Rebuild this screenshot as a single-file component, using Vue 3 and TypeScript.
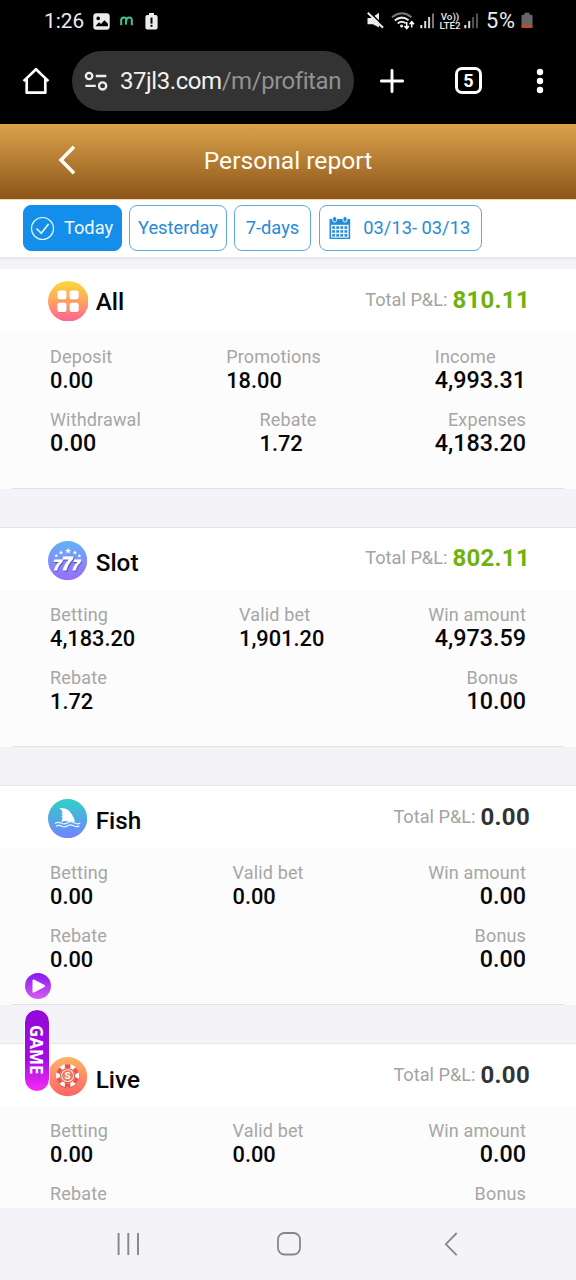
<script setup lang="ts">
type Metric = { label: string; value?: string; large?: boolean; side?: 'start' | 'end' }
type Section = {
  key: 'all' | 'slot' | 'fish' | 'live'
  name: string
  total: string
  rows: Metric[][]
}

const sections: Section[] = [
  {
    key: 'all',
    name: 'All',
    total: '810.11',
    rows: [
      [
        { label: 'Deposit', value: '0.00' },
        { label: 'Promotions', value: '18.00' },
        { label: 'Income', value: '4,993.31', large: true },
      ],
      [
        { label: 'Withdrawal', value: '0.00', large: true },
        { label: 'Rebate', value: '1.72' },
        { label: 'Expenses', value: '4,183.20', large: true, side: 'end' },
      ],
    ],
  },
  {
    key: 'slot',
    name: 'Slot',
    total: '802.11',
    rows: [
      [
        { label: 'Betting', value: '4,183.20' },
        { label: 'Valid bet', value: '1,901.20' },
        { label: 'Win amount', value: '4,973.59', large: true, side: 'end' },
      ],
      [
        { label: 'Rebate', value: '1.72' },
        { label: 'Bonus', value: '10.00', large: true },
      ],
    ],
  },
  {
    key: 'fish',
    name: 'Fish',
    total: '0.00',
    rows: [
      [
        { label: 'Betting', value: '0.00' },
        { label: 'Valid bet', value: '0.00' },
        { label: 'Win amount', value: '0.00', large: true, side: 'end' },
      ],
      [
        { label: 'Rebate', value: '0.00' },
        { label: 'Bonus', value: '0.00', large: true, side: 'end' },
      ],
    ],
  },
  {
    key: 'live',
    name: 'Live',
    total: '0.00',
    rows: [
      [
        { label: 'Betting', value: '0.00' },
        { label: 'Valid bet', value: '0.00' },
        { label: 'Win amount', value: '0.00', large: true, side: 'end' },
      ],
      [{ label: 'Rebate' }, { label: 'Bonus', side: 'end' }],
    ],
  },
]

const chipAngles = [0, 60, 120, 180, 240, 300]
const calendarRows = [11.5, 15.4, 19.3]
const calendarCols = [3.2, 7.3, 11.4, 15.5]
</script>

<template>
  <div class="screen">
    <div class="status">
      <span class="clock">1:26</span>
      <svg class="st-photo" width="17" height="17" viewBox="0 0 17 17">
        <rect x="0.3" y="0.3" width="16.4" height="16.4" rx="3" fill="#ececec" />
        <circle cx="5.2" cy="5.4" r="1.8" fill="#000" />
        <path d="M2.4 13.2 6 9.2l2 1.8 3.4-3.7 3.5 3.4v2.5z" fill="#000" />
      </svg>
      <svg class="st-m" width="13" height="10" viewBox="0 0 13 10">
        <path d="M1.2 9.2V4.2Q1.2 1.4 3.8 1.4 6.4 1.4 6.2 4.2L5.8 8.6M6.3 4.2Q6.8 1.4 9.2 1.4 11.9 1.4 11.8 4.2V9.2" fill="none" stroke="#3fc98f" stroke-width="2" />
      </svg>
      <svg class="st-alert" width="13" height="17" viewBox="0 0 13 17">
        <path d="M4 0h5v2h1.8Q12.6 2 12.6 4v10.6q0 2-1.8 2H2.2q-1.8 0-1.8-2V4q0-2 1.8-2H4z" fill="#ececec" />
        <rect x="5.5" y="4.6" width="2" height="6" fill="#000" />
        <rect x="5.5" y="11.8" width="2" height="2" fill="#000" />
      </svg>
      <span class="grow"></span>
      <svg class="st-mute" width="17" height="17" viewBox="0 0 17 17">
        <path d="M.5 6h3.800L12 .8v14.800L6 12.200H.5z" fill="#ececec" />
        <path d="M2.300-.2 17.300 14.600" stroke="#000" stroke-width="1.600" />
        <path d="M.8.8 16 15.8" stroke="#ececec" stroke-width="2" />
      </svg>
      <svg class="st-wifi" width="24" height="18" viewBox="0 0 24 18">
        <g fill="none" stroke-width="2">
          <path d="M1 5.2Q11 -2.6 20.5 5.2" stroke="#777" />
          <path d="M3.8 8.4Q10.7 3 17.6 8.2" stroke="#e6e6e6" />
          <path d="M6.7 11.4q4-3.3 8-.2" stroke="#e6e6e6" />
        </g>
        <circle cx="10.600" cy="14" r="1.600" fill="#e6e6e6" />
        <path d="M15.700 10v6M13.500 14l2.200 2.500 2.200-2.500M20.800 15.500V10M18.600 12.200l2.200-2.500 2.200 2.500" fill="none" stroke="#fff" stroke-width="1.500" />
      </svg>
      <svg class="st-bars" width="15" height="16" viewBox="0 0 15 16">
        <rect x="0.3" y="12" width="2" height="3.2" fill="#e8e8e8" />
        <rect x="4.2" y="8" width="2" height="7.2" fill="#d8d8d8" />
        <rect x="8.1" y="4" width="2" height="11.2" fill="#d0d0d0" />
        <rect x="12" y="0.5" width="2" height="14.7" fill="#777" />
      </svg>
      <span class="lte"><b>Vo))</b><b>LTE2</b></span>
      <svg class="st-bars second" width="15" height="16" viewBox="0 0 15 16">
        <rect x="0.3" y="12" width="2" height="3.2" fill="#e8e8e8" />
        <rect x="4.2" y="8" width="2" height="7.2" fill="#d8d8d8" />
        <rect x="8.1" y="4" width="2" height="11.2" fill="#555" />
        <rect x="12" y="0.5" width="2" height="14.7" fill="#555" />
      </svg>
      <span class="percent">5%</span>
      <svg class="st-batt" width="12" height="17" viewBox="0 0 12 17">
        <path d="M3.5.8h5v2h1.8q1.2 0 1.2 1.2v10.4q0 1.6-1.6 1.6H2.1Q.5 16 .5 14.4V4Q.5 2.800 1.7 2.8h1.800z" fill="#666" />
        <path d="M.5 13.300h11v1.100q0 1.600-1.600 1.600H2.100Q.5 16 .5 14.400z" fill="#c8472f" />
      </svg>
    </div>

    <div class="browser">
      <svg class="br-home" width="28" height="28" viewBox="0 0 28 28">
        <path d="M1.600 14.100 14 2.200 26.400 14.100M4.700 12v13.700h18.600V12" fill="none" stroke="#fff" stroke-width="2.700" stroke-linejoin="round" />
      </svg>
      <div class="omnibox">
        <svg width="24" height="20" viewBox="0 0 24 20">
          <g fill="none" stroke="#efefef" stroke-width="2.300">
            <circle cx="5.100" cy="5" r="3.200" />
            <path d="M11.800 5h10.500M1.400 14.800h10.400" />
            <circle cx="18.600" cy="14.900" r="3.600" />
          </g>
        </svg>
        <span class="url">37jl3.com<i>/m/profitan</i></span>
      </div>
      <svg class="br-plus" width="24" height="24" viewBox="0 0 24 24">
        <path d="M12 1.400v21.200M1.400 12h21.200" stroke="#fff" stroke-width="2.900" stroke-linecap="round" />
      </svg>
      <span class="tabs">5</span>
      <svg class="br-more" width="8" height="26" viewBox="0 0 8 26">
        <g fill="#fff"><circle cx="4" cy="4" r="3.200" /><circle cx="4" cy="13" r="3.200" /><circle cx="4" cy="22" r="3.200" /></g>
      </svg>
    </div>

    <header class="title-bar">
      <svg width="20" height="32" viewBox="0 0 20 32">
        <path d="M17 2.800 4 16l13 13.200" fill="none" stroke="#fffdf5" stroke-width="3.600" />
      </svg>
      <h1>Personal report</h1>
    </header>

    <nav class="filters">
      <button class="chip active">
        <svg width="25" height="25" viewBox="0 0 25 25" fill="none" stroke="#e5f4ff">
          <circle cx="12.500" cy="12.500" r="11" stroke-width="1.200" />
          <path d="m6.500 12.500 4.700 4.800 7.400-9.300" stroke-width="1.700" />
        </svg>
        <span>Today</span>
      </button>
      <button class="chip yesterday"><span>Yesterday</span></button>
      <button class="chip week"><span>7-days</span></button>
      <button class="chip range">
        <svg width="22" height="24" viewBox="0 0 22 24">
          <path d="M0.500 3h20.700v20H.5z" fill="#258bd8" />
          <path d="M2 8.800h17.700v12.900H2z" fill="#e9f5ff" />
          <g v-for="y in calendarRows" :key="y" fill="#258bd8">
            <rect v-for="x in calendarCols" :key="x" :x="x" :y="y - 1.2" width="2.700" height="2.500" />
          </g>
          <rect x="3.600" y="0.500" width="4" height="5.500" rx="2" fill="#258bd8" stroke="#fff" stroke-width="0.900" />
          <rect x="14" y="0.500" width="4" height="5.500" rx="2" fill="#258bd8" stroke="#fff" stroke-width="0.900" />
        </svg>
        <span>03/13- 03/13</span>
      </button>
    </nav>

    <main class="list">
      <section v-for="s in sections" :key="s.key" class="card" :class="s.key">
        <div class="head">
          <svg v-if="s.key === 'all'" class="badge" viewBox="0 0 40 40">
            <defs>
              <linearGradient id="g-all" x2="0" y2="1"><stop stop-color="#fbd936" /><stop offset="0.500" stop-color="#ffa45f" /><stop offset="1" stop-color="#ff6097" /></linearGradient>
            </defs>
            <circle cx="20" cy="20" r="20" fill="url(#g-all)" />
            <g fill="#e86a4c" opacity="0.600">
              <rect x="9.500" y="10.300" width="9" height="9" rx="2.500" /><rect x="21.500" y="10.300" width="9" height="9" rx="2.500" />
              <rect x="9.500" y="22.300" width="9" height="9" rx="2.500" /><rect x="21.500" y="22.300" width="9" height="9" rx="2.500" />
            </g>
            <g fill="#fff">
              <rect x="9.300" y="9.300" width="9" height="9" rx="2.500" /><rect x="21.300" y="9.300" width="9" height="9" rx="2.500" />
              <rect x="9.300" y="21.500" width="9" height="9" rx="2.500" /><rect x="21.300" y="21.500" width="9" height="9" rx="2.500" />
            </g>
          </svg>
          <svg v-else-if="s.key === 'slot'" class="badge" viewBox="0 0 40 40">
            <defs>
              <linearGradient id="g-slot" x2="0" y2="1"><stop stop-color="#61b4f6" /><stop offset="1" stop-color="#9b6cfa" /></linearGradient>
              <path id="star" d="M0-3 .9-1 3-.8 1.400.6 1.900 2.700 0 1.600-1.900 2.700-1.400.6-3-.8-.9-1z" />
            </defs>
            <circle cx="20" cy="20" r="20" fill="url(#g-slot)" />
            <g fill="#f2f6ff">
              <use href="#star" x="20.500" y="10" />
              <use href="#star" transform="translate(13.300 11.800) scale(.75)" /><use href="#star" transform="translate(27.500 11.800) scale(.75)" />
              <use href="#star" transform="translate(8.500 15) scale(.65)" /><use href="#star" transform="translate(32 15) scale(.65)" />
            </g>
            <g class="sevens" stroke-width="0.900">
              <g fill="#5748b8" stroke="#5748b8">
                <text x="6.200" y="30.300" font-size="15.500">7</text><text x="25" y="30.300" font-size="15.500">7</text>
              </g>
              <g fill="#fff" stroke="#fff">
                <text x="5.300" y="29.300" font-size="15.500">7</text><text x="24.300" y="29.300" font-size="15.500">7</text>
              </g>
              <text x="15" y="31" font-size="19" fill="#5748b8" stroke="#5748b8">7</text>
              <text x="14.100" y="30" font-size="19" fill="#fff" stroke="#fff">7</text>
            </g>
          </svg>
          <svg v-else-if="s.key === 'fish'" class="badge" viewBox="0 0 40 40">
            <defs>
              <linearGradient id="g-fish" x2="0" y2="1"><stop stop-color="#2fd0c7" /><stop offset="1" stop-color="#7482ff" /></linearGradient>
            </defs>
            <circle cx="20" cy="20" r="20" fill="url(#g-fish)" />
            <path d="M11.700 9.300Q23 8 27.500 22.700 24.300 24.300 20.500 23 17 21.800 13.500 23.800 15 20.300 14.800 18.500L13.500 17.500 15.200 16.500 13.800 15 15 13.800Q14 11.300 11.700 9.300z" fill="#fff" />
            <path d="M7 25q3.200-2.200 6.500-.3 3.200 1.700 6.500-.5 3.200-2.100 6.500 0 3.200 1.900 6.500.5M8 27.800q3-1.700 6 0 3 1.500 6-.5 3-1.800 6 0 3 1.500 6 .3" fill="none" stroke="#e2f7ff" stroke-width="1.300" />
          </svg>
          <svg v-else class="badge" viewBox="0 0 40 40">
            <defs>
              <linearGradient id="g-live" x2="0" y2="1"><stop stop-color="#ffb562" /><stop offset="1" stop-color="#ff6268" /></linearGradient>
            </defs>
            <circle cx="20" cy="20" r="20" fill="url(#g-live)" />
            <circle cx="20" cy="19.800" r="12" fill="#d34c42" opacity="0.600" />
            <circle cx="20" cy="19" r="11.800" fill="#fff" />
            <rect v-for="a in chipAngles" :key="a" x="17.200" y="7.400" width="5.600" height="3.900" fill="#e75449" :transform="`rotate(${a} 20 19)`" />
            <circle cx="20" cy="19" r="7.200" fill="#fff" stroke="#e75449" stroke-width="1.200" />
            <circle cx="20" cy="19" r="5.700" fill="#f07a55" />
            <text x="20" y="22.800" class="coin">S</text>
          </svg>
          <h2>{{ s.name }}</h2>
          <p class="total">
            <span>Total P&amp;L:</span>
            <strong :class="{ gain: s.total !== '0.00' }">{{ s.total }}</strong>
          </p>
        </div>
        <div class="body">
          <div v-for="(row, i) in s.rows" :key="i" class="row">
            <div v-for="m in row" :key="m.label" class="metric" :class="[m.side, { large: m.large }]">
              <span>{{ m.label }}</span>
              <strong v-if="m.value">{{ m.value }}</strong>
            </div>
          </div>
        </div>
      </section>
    </main>

    <svg class="float-play" width="28" height="28" viewBox="0 0 28 28">
      <defs>
        <linearGradient id="g-play" x2="0" y2="1"><stop stop-color="#8618ee" /><stop offset="1" stop-color="#d65cf2" /></linearGradient>
      </defs>
      <circle cx="14" cy="14" r="13.700" fill="#fff" />
      <circle cx="14" cy="14" r="13" fill="url(#g-play)" />
      <path d="M9.500 8.500v11.200L20 14z" fill="#fff" stroke="#fff" stroke-width="2" stroke-linejoin="round" />
    </svg>
    <div class="float-game"><span>GAME</span></div>

    <footer class="system-nav">
      <svg width="24" height="24" viewBox="0 0 24 24"><path d="M2.600 1v22M12.300 1v22M22 1v22" stroke="#87878b" stroke-width="1.900" /></svg>
      <svg class="nav-home" width="26" height="26" viewBox="0 0 26 26"><rect x="2" y="2" width="22" height="21.500" rx="6.500" fill="none" stroke="#87878b" stroke-width="1.800" /></svg>
      <svg width="14" height="24" viewBox="0 0 14 24"><path d="M12.700 1 1.800 12.200 12.700 23.200" fill="none" stroke="#87878b" stroke-width="1.800" /></svg>
    </footer>
  </div>
</template>

<style>
body {
  background: #f3f3f8;
}
</style>

<style scoped>
* {
  box-sizing: border-box;
}
.screen {
  position: relative;
  display: flex;
  flex-direction: column;
  width: 576px;
  height: 1280px;
  overflow: hidden;
  background: #f3f3f8;
  font-family: Roboto, "Liberation Sans", sans-serif;
}
svg {
  flex: none;
  display: block;
}
h1,
h2,
p {
  margin: 0;
}
.status {
  display: flex;
  align-items: flex-start;
  flex: none;
  height: 42px;
  padding: 0 43px 0 44px;
  background: #000;
  color: #ececec;
}
.clock,
.percent {
  font-size: 20.800px;
  line-height: 24px;
  margin-top: 8.500px;
}
.clock {
  width: 49px;
}
.st-photo {
  margin-top: 12.500px;
}
.st-m {
  margin: 15.500px 0 0 10px;
}
.st-alert {
  margin: 13px 0 0 12px;
}
.grow {
  flex: 1;
}
.st-mute {
  margin-top: 12px;
}
.st-wifi {
  margin: 12px 0 0 7px;
}
.st-bars {
  margin: 13px 0 0 5px;
}
.lte {
  display: flex;
  flex-direction: column;
  align-items: center;
  width: 22px;
  margin: 11.500px 0 0 4px;
  font-size: 9.800px;
  line-height: 9px;
}
.lte b {
  font-weight: 500;
}
.st-bars.second {
  margin-left: 3px;
}
.percent {
  width: 33px;
  margin-left: 7px;
  font-size: 21.800px;
  letter-spacing: 0.800px;
}
.st-batt {
  margin: 12px 0 0 2px;
}
.browser {
  display: flex;
  flex: none;
  align-items: center;
  height: 82px;
  padding: 0 32px 5px 22px;
  background: #000;
}
.omnibox {
  display: flex;
  align-items: center;
  width: 282px;
  height: 60px;
  margin-left: 22px;
  padding-left: 12px;
  border-radius: 30px;
  background: #333;
}
.url {
  margin-left: 12px;
  color: #f1f1f1;
  font-size: 24px;
  letter-spacing: -0.450px;
}
.url i {
  color: #929292;
  font-style: normal;
}
.br-plus {
  margin-left: 26px;
}
.tabs {
  width: 27px;
  height: 27px;
  margin-left: 51px;
  border: 3px solid #fff;
  border-radius: 7px;
  color: #fff;
  font-size: 18px;
  font-weight: 700;
  line-height: 22px;
  text-align: center;
}
.br-more {
  margin-left: auto;
}
.title-bar {
  position: relative;
  display: flex;
  flex: none;
  align-items: center;
  justify-content: center;
  height: 75px;
  padding-bottom: 2px;
  background: linear-gradient(#dba24b, #8c5519);
}
.title-bar svg {
  position: absolute;
  left: 56.500px;
  top: 20px;
}
.title-bar h1 {
  color: #fffdf5;
  font-size: 24.600px;
  font-weight: 400;
}
.filters {
  display: flex;
  flex: none;
  height: 58px;
  padding: 5px 0 0 23px;
  border-top: 1px solid #f7d8a8;
  background: #fff;
  box-shadow: 0 1px 3px #dedee3;
}
.chip {
  display: flex;
  align-items: center;
  justify-content: center;
  height: 46px;
  padding: 0;
  border: 1px solid #5fa9da;
  border-radius: 8px;
  background: #fff;
  color: #258bd8;
  font-family: inherit;
  font-size: 18.300px;
}
.chip span {
  padding-bottom: 2px;
}
.chip.active {
  gap: 8.500px;
  width: 98.500px;
  padding-right: 1px;
  border-color: #138eeb;
  background: #138eeb;
  color: #f1f9ff;
}
.yesterday {
  width: 98px;
  margin-left: 7.500px;
}
.week {
  width: 77px;
  margin-left: 7px;
}
.range {
  gap: 12px;
  width: 163.500px;
  margin-left: 7.500px;
  padding-right: 1px;
}
.list {
  flex: 1;
  min-height: 0;
  padding-top: 11.600px;
  overflow: hidden;
}
.card {
  height: 220px;
  margin-bottom: 38.250px;
  border-top: 1px solid #e6e6ea;
  background: #fff;
}
.card.all {
  border-top-color: #fff;
}
.card.live {
  height: auto;
}
.head {
  display: flex;
  align-items: flex-start;
  height: 62px;
  padding: 0 46px 0 48px;
}
.badge {
  width: 39.200px;
  height: 39.200px;
  margin-top: 13px;
}
.all .badge {
  width: 40.600px;
  height: 40.600px;
  margin: 11px -0.900px 0 -0.500px;
}
h2 {
  margin: 21.300px 0 0 8.500px;
  font-size: 24.300px;
  font-weight: 500;
  line-height: 28px;
  color: #060606;
}
.all h2 {
  margin-top: 18.800px;
}
.total {
  display: flex;
  align-items: flex-start;
  gap: 5px;
  margin: 16.500px 0 0 auto;
  line-height: 28px;
}
.total span {
  color: #a3a3a3;
  font-size: 18.200px;
  line-height: 28px;
}
.total strong {
  color: #333;
  font-size: 24px;
  font-weight: 700;
  letter-spacing: 0.300px;
}
.total .gain {
  color: #70b10c;
}
.body {
  position: relative;
  display: flex;
  flex-direction: column;
  gap: 16px;
  height: 157px;
  padding: 13px 50px 0;
  background: #fcfcfc;
}
.live .body {
  height: 103px;
}
.body::after {
  content: "";
  position: absolute;
  right: 12px;
  bottom: 0;
  left: 12px;
  height: 1px;
  background: #e2e2e6;
}
.live .body::after {
  display: none;
}
.row {
  display: flex;
  justify-content: space-between;
}
.metric {
  display: flex;
  flex-direction: column;
}
.metric.end {
  align-items: flex-end;
}
.metric span {
  color: #a6a6a6;
  font-size: 18px;
  line-height: 24px;
  letter-spacing: 0.150px;
}
.metric strong {
  color: #060606;
  font-size: 21.800px;
  font-weight: 500;
  line-height: 23px;
}
.metric.large strong {
  font-size: 23.300px;
}
.sevens {
  font-family: "Liberation Sans", sans-serif;
  font-style: italic;
  font-weight: 700;
}
.coin {
  fill: #fff;
  font-size: 10px;
  font-weight: 700;
  text-anchor: middle;
}
.float-play {
  position: absolute;
  left: 24.300px;
  top: 972.300px;
}
.float-game {
  position: absolute;
  left: 24px;
  top: 1009px;
  display: flex;
  align-items: center;
  justify-content: center;
  width: 25.500px;
  height: 82.500px;
  border: 1px solid #fff;
  border-radius: 13px;
  background: linear-gradient(#9208d8, #a40be2 60%, #f52bf5);
}
.float-game span {
  padding-right: 1px;
  color: #fff;
  font-family: "Noto Sans", sans-serif;
  font-size: 17px;
  font-weight: 700;
  line-height: 23px;
  writing-mode: vertical-rl;
}
.system-nav {
  display: flex;
  flex: none;
  justify-content: space-between;
  align-items: center;
  height: 72px;
  padding: 0 118px 0 116px;
  background: #f3f3f8;
}
.nav-home {
  margin: 0 3px 0 -3px;
}
</style>
